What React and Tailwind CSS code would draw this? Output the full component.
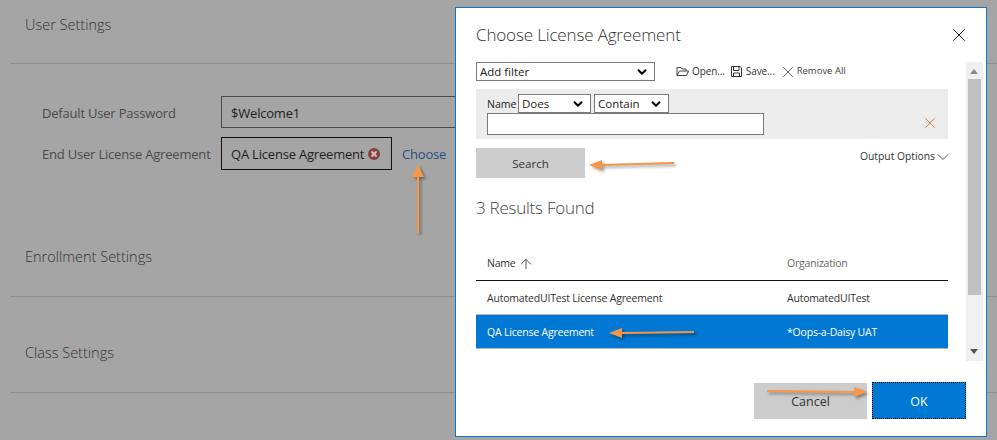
import { ArrowUp, ChevronDown, X } from 'lucide-react';

// screenshot annotation arrow, coords are page pixels
function Arrow({ className, width, height, line, head }) {
  return (
    <svg className={`absolute drop-shadow-[2px_2px_1.5px_rgba(0,0,0,0.4)] ${className}`} width={width} height={height}>
      <path d={line} stroke="#f79646" strokeWidth="2" fill="none" />
      <path d={head} fill="#f79646" />
    </svg>
  );
}

function Select({ label, className }) {
  return (
    <div className={`relative h-[19px] flex items-center border border-[#7a7a7a] bg-white text-[11.5px] text-[#222] pl-[3px] ${className}`}>
      <span>{label}</span>
      <ChevronDown className="absolute right-[5px] top-[2px] text-black" size={14} strokeWidth={2} absoluteStrokeWidth />
    </div>
  );
}

function Section({ title, height }) {
  return (
    <div className="ml-[10px] border-b border-[#8f8f8f]" style={{ height }}>
      <h2 className="pl-[15px] text-[14.5px] font-light text-[#333] leading-5">{title}</h2>
    </div>
  );
}

export default function App() {
  return (
    <div className='relative w-[997px] h-[440px] overflow-hidden bg-[#a5a5a5] font-["Open_Sans","Noto_Sans",sans-serif]'>
      {/* page behind the dialog */}
      <div className="pt-[15px]">
        <Section title="User Settings" height={49} />
        <div className="h-[183px] pl-[42px] pt-[32px] text-[13px] tracking-[-0.2px] text-[#4a4a4a] whitespace-nowrap">
          <div className="flex items-center h-[32px]">
            <span className="w-[179px] pt-[3px]">Default User Password</span>
            <div className="w-[300px] h-[32px] flex items-center pl-[9px] pt-[3px] border border-[#4a4a4a] text-[#1e1e1e]">$Welcome1</div>
          </div>
          <div className="flex items-center h-[33px] mt-[9px]">
            <span className="w-[179px] pt-[3px]">End User License Agreement</span>
            <div className="w-[171px] h-[33px] flex items-center pl-[9px] gap-[4px] border border-[#111] text-[#1e1e1e]">
              <span className="pt-[3px]">QA License Agreement</span>
              <span className="w-[12px] h-[12px] mt-[1px] rounded-full bg-[#8a3f3f] flex items-center justify-center">
                <X size={8} strokeWidth={2} absoluteStrokeWidth className="text-[#cfc0c0]" />
              </span>
            </div>
            <a className="ml-[10px] pt-[3px] text-[#274f7d]">Choose</a>
          </div>
        </div>
        <Section title="Enrollment Settings" height={50} />
        <div className="pt-[46px]">
          <Section title="Class Settings" height={50} />
        </div>
      </div>

      <Arrow className="left-[410px] top-[164px]" width={16} height={72} line="M8 12V69" head="M8 1L14 13H2Z" />

      {/* dialog */}
      <div className="absolute left-[455px] top-[7px] w-[532px] h-[430px] bg-white border border-[#0f76c4] flex">
        <div className="w-[510px] pl-[20px] pt-[15px]">
          <h1 className="text-[17px] tracking-[-0.15px] leading-6 font-light text-[#333]">Choose License Agreement</h1>
          <div className="flex items-center h-[19px] mt-[15px]">
            <Select label="Add filter" className="w-[179px]" />
            <svg className="ml-[21px] text-[#444]" width="13" height="11" viewBox="0 0 13 11" fill="none" stroke="currentColor">
              <path d="M1 9.5V1.5h4l1 1.5h4V5M1 9.5h9.500L12.500 5H3.500L1 9.500Z" />
            </svg>
            <span className="ml-[3px] text-[10px] tracking-[-0.1px] text-[#333]">Open...</span>
            <svg className="ml-[6px] text-[#333]" width="11" height="11" viewBox="0 0 11 11" fill="none" stroke="currentColor">
              <path d="M.5.5h8.500l1.500 1.500v8.500H.5Z" />
              <path d="M2.500.5v4h5.500v-4M2.500 10.500v-3.500h6v3.500" />
            </svg>
            <span className="ml-[4px] text-[10px] tracking-[-0.1px] text-[#333]">Save...</span>
            <X className="ml-[4px] text-[#666]" size={18} strokeWidth={1} absoluteStrokeWidth />
            <span className="text-[9.5px] text-[#444]">Remove All</span>
          </div>
          <div className="relative mt-[8px] w-[472px] h-[50px] bg-[#ececec] pl-[11px] pt-[5px]">
            <div className="flex items-center text-[#222]">
              <span className="w-[31px] pt-[2px] text-[10.5px]">Name</span>
              <Select label="Does" className="w-[73px]" />
              <Select label="Contain" className="w-[75px] ml-[3px]" />
            </div>
            <input className="block w-[277px] h-[22px] border border-[#7a7a7a] bg-white" />
            <X className="absolute right-[9px] top-[25px] text-[#c98a4b]" size={18} strokeWidth={1} absoluteStrokeWidth />
          </div>
          <div className="flex items-start justify-between w-[472px] mt-[9px]">
            <button className="w-[109px] h-[30px] pt-[1px] bg-[#cccccc] text-[11.5px] text-[#333]">Search</button>
            <div className="flex items-center h-[15px] mt-[1px] text-[10.3px] text-[#333]">
              Output Options
              <ChevronDown size={20} strokeWidth={1} absoluteStrokeWidth className="-ml-[2px] -mr-[5px] text-[#555]" />
            </div>
          </div>
          <h2 className="mt-[18px] text-[17px] tracking-[-0.25px] leading-6 font-light text-[#444]">3 Results Found</h2>
          <div className="w-[472px] mt-[32px] text-[10.5px] tracking-[-0.2px]">
            <div className="flex items-center h-[29px] pl-[11px] pb-[4px] border-b border-[#111]">
              <span className="w-[300px] flex items-center gap-[2px] text-[#333]">
                Name <ArrowUp size={16} strokeWidth={1} absoluteStrokeWidth className="text-[#555]" />
              </span>
              <span className="text-[#666]">Organization</span>
            </div>
            <div className="flex items-center h-[34px] pl-[11px] pt-[2px] border-b border-[#b5b5b5] text-[#333]">
              <span className="w-[300px]">AutomatedUITest License Agreement</span>
              <span>AutomatedUITest</span>
            </div>
            <div className="flex items-center h-[34px] pl-[11px] pt-[2px] border-b border-[#b5b5b5] bg-[#0078d4] text-white">
              <span className="w-[300px]">QA License Agreement</span>
              <span>*Oops-a-Daisy UAT</span>
            </div>
          </div>
          <div className="flex justify-end mt-[33px] gap-[5px] items-start">
            <button className="w-[113px] h-[36px] mt-[1px] pt-[3px] bg-[#cccccc] text-[12.5px] text-[#333]">Cancel</button>
            <button className="w-[94px] h-[37px] pt-[3px] bg-[#0078d4] border border-dotted border-black text-[12.5px] text-white">OK</button>
          </div>
        </div>
        <div className="relative w-[17px] h-[299px] mt-[54px] bg-[#f0f0f0]">
          <span className="absolute left-[4px] top-[7px] border-x-[4px] border-x-transparent border-b-[5px] border-b-[#8a8a8a]" />
          <div className="absolute left-[2px] top-[17px] w-[13px] h-[216px] bg-[#c0c0c0]" />
          <span className="absolute left-[4px] bottom-[7px] border-x-[4px] border-x-transparent border-t-[5px] border-t-[#555]" />
        </div>
        <X className="absolute left-[492px] top-[16px] text-[#222]" size={22} strokeWidth={1} absoluteStrokeWidth />
      </div>

      <Arrow className="left-[588px] top-[157px]" width={90} height={16} line="M14 8L86 6" head="M1 8L14 3V13Z" />
      <Arrow className="left-[608px] top-[325px]" width={90} height={16} line="M14 8L86 7" head="M1 8L14 3V13Z" />
      <Arrow className="left-[766px] top-[384px]" width={104} height={16} line="M1 7L90 8" head="M101 8L88 3V13Z" />
    </div>
  );
}
